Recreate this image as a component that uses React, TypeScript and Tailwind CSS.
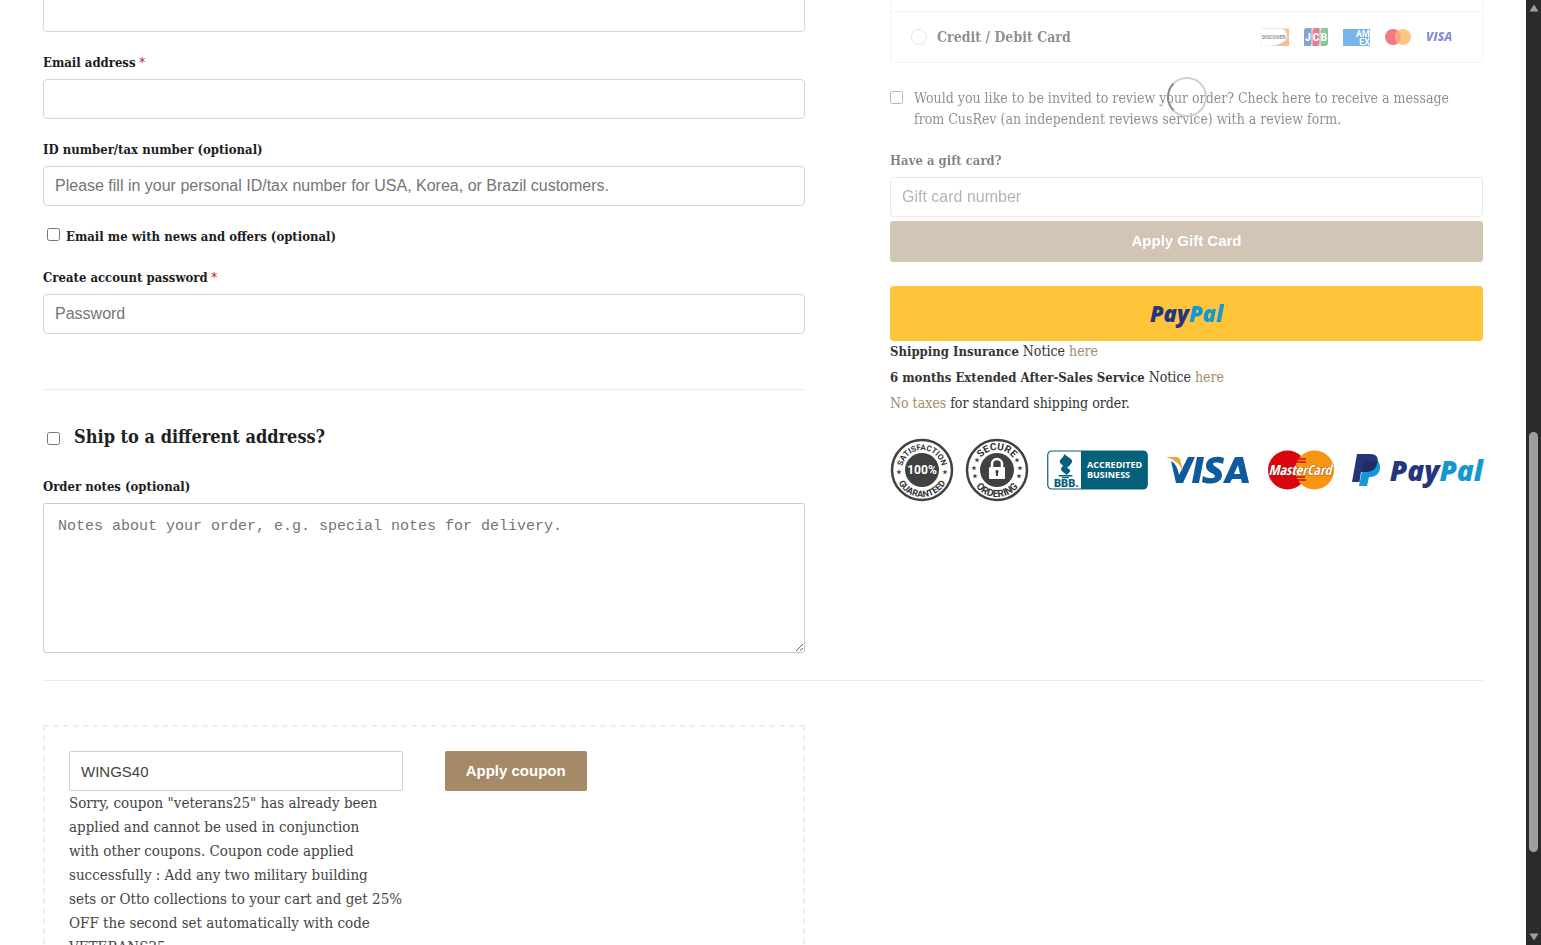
// src/App.tsx
import { ReactNode } from 'react';

const NOTICE_TEXT = 'text-[14px] leading-[21px]';

interface FieldProps {
  id: string;
  label: string;
  type?: string;
  required?: boolean;
  placeholder?: string;
}

const inputClass =
  'block h-10 w-full rounded border border-[#d3d5d6] bg-white px-[11px] font-[Arial,"Liberation_Sans",sans-serif] text-[16px] text-[#444] placeholder:text-[#757575]';

const labelClass = 'block text-[13px] font-semibold leading-[21px] text-[#1c1c1c]';

const Field = ({ id, label, type = 'text', required, placeholder }: FieldProps) => (
  <div className="mt-5">
    <label htmlFor={id} className={`${labelClass} mb-1.5`}>
      {label}
      {required && <span className="font-normal text-[#c01616]"> *</span>}
    </label>
    <input id={id} type={type} placeholder={placeholder} className={inputClass} />
  </div>
);

/* ---------- small card icons ---------- */

const DiscoverIcon = () => (
  <svg viewBox="0 0 28 18" className="h-[18px] w-7" role="img" aria-label="Discover">
    <rect x="0.5" y="0.5" width="27" height="17" fill="#fff" stroke="#ddd" />
    <path d="M21 1h7v17H10c8-1 15-4 16-9 0-4-2-7-5-8z" fill="#f08a3c" />
    <path d="M0.5 1H21c4 1 5 5 4 8-2 5-9 8-16 8.500H0.500z" fill="#fff" />
    <text x="1" y="11" fontSize="5" fontWeight="700" fontFamily="Roboto, sans-serif" fill="#333">
      DISCOVER
    </text>
  </svg>
);

const JcbIcon = () => (
  <svg viewBox="0 0 24 18" className="h-[18px] w-6" role="img" aria-label="JCB">
    <path d="M3 0h5v15a3 3 0 0 1-3 3H0V3a3 3 0 0 1 3-3z" fill="#1c5ba3" />
    <path d="M11 0h5v15a3 3 0 0 1-3 3H8V3a3 3 0 0 1 3-3z" fill="#d2173c" />
    <path d="M19 0h5v15a3 3 0 0 1-3 3h-5V3a3 3 0 0 1 3-3z" fill="#2c9c43" />
    <g fontSize="10" fontWeight="900" fontFamily="Roboto, sans-serif" fill="#fff" textAnchor="middle">
      <text x="4" y="13">J</text>
      <text x="12" y="13">C</text>
      <text x="20" y="13">B</text>
    </g>
    <path d="M8 0v18M16 0v18" stroke="#fff" strokeWidth="0.8" />
  </svg>
);

const AmexIcon = () => (
  <svg viewBox="0 0 27 17" className="h-[17px] w-[27px]" role="img" aria-label="American Express">
    <rect width="27" height="17" fill="#0a79d8" />
    <g fontSize="9" fontWeight="700" fontFamily="Roboto, sans-serif" fill="#fff" textAnchor="end">
      <text x="27" y="8">AM</text>
      <text x="27" y="16">EX</text>
    </g>
  </svg>
);

const MastercardIcon = () => (
  <svg viewBox="0 0 26 16" className="h-4 w-[26px]" role="img" aria-label="Mastercard">
    <circle cx="8" cy="8" r="8" fill="#eb0a25" />
    <circle cx="18" cy="8" r="8" fill="#f79a1a" />
    <path d="M13 1.750a8 8 0 0 1 0 12.500a8 8 0 0 1 0-12.500z" fill="#ff5a10" />
  </svg>
);

const VisaIcon = () => (
  <svg viewBox="0 0 28 16" className="h-4 w-7" role="img" aria-label="Visa">
    <text x="0" y="12" fontSize="12" fontWeight="800" fontStyle="italic" fontFamily='"Open Sans", sans-serif' fill="#1f33b4">
      VISA
    </text>
  </svg>
);

/* ---------- trust badges ---------- */

interface SealProps {
  id: string;
  top: string;
  bottom: string;
  topSize: number;
  bottomSize: number;
  stars: [number, number][];
  children: ReactNode;
}

const Seal = ({ id, top, bottom, topSize, bottomSize, stars, children }: SealProps) => (
  <svg viewBox="0 0 64 64" className="size-16" role="img" aria-label={`${top} ${bottom}`}>
    <defs>
      <path id={`${id}-top`} d="M12 32a20 20 0 0 1 40 0" />
      <path id={`${id}-bottom`} d="M5 32a27 27 0 0 0 54 0" />
    </defs>
    <circle cx="32" cy="32" r="30" fill="#fff" stroke="#414144" strokeWidth="2.500" />
    <circle cx="32" cy="32" r="17" fill="#414144" />
    <g fontFamily="Roboto, sans-serif" fontWeight="700" fill="#333336" textAnchor="middle">
      <text fontSize={topSize}>
        <textPath href={`#${id}-top`} startOffset="50%">
          {top}
        </textPath>
      </text>
      <text fontSize={bottomSize}>
        <textPath href={`#${id}-bottom`} startOffset="50%">
          {bottom}
        </textPath>
      </text>
    </g>
    {stars.map(([x, y]) => (
      <path
        key={`${x}-${y}`}
        transform={`translate(${x} ${y})`}
        d="M0-2.500L0.700-0.800L2.500-0.700L1.100 0.400L1.600 2.200L0 1.200L-1.600 2.200L-1.100 0.400L-2.500-0.700L-0.700-0.800z"
        fill="#414144"
      />
    ))}
    {children}
  </svg>
);

const BbbLogo = () => (
  <svg viewBox="0 0 101 40" className="h-10 w-[101px]" role="img" aria-label="BBB Accredited Business">
    <rect x="0.750" y="1" width="99.500" height="38" rx="4" fill="#fff" stroke="#0b5f74" strokeWidth="1.200" />
    <path d="M34 1h62a4 4 0 0 1 4 4v30a4 4 0 0 1-4 4H34z" fill="#056079" />
    <path d="M17 4l7 5c2 2 1 4-1 6l-3 3-6-4c-2-2-1-4 0-5 2-2 3-3 3-5z" fill="#056079" />
    <path d="M16 15l6 4c2 1 1 3 0 4l-3 2c0-2-5-3-5-6 0-2 2-2 2-4z" fill="#056079" />
    <path d="M11 25h15l-1.500 1.500h-12zM15 27h7v1.200h-7z" fill="#056079" />
    <text x="7" y="37" fontSize="11" fontWeight="900" fontFamily="Roboto, sans-serif" fill="#056079">
      BBB.
    </text>
    <g fontSize="9" fontWeight="700" fontFamily='"Open Sans", sans-serif' fill="#fff">
      <text x="40" y="18">ACCREDITED</text>
      <text x="40" y="28">BUSINESS</text>
    </g>
  </svg>
);

const VisaLogo = () => (
  <svg viewBox="0 0 84 30" className="h-[30px] w-[84px]" role="img" aria-label="Visa">
    <g fill="#0e5a9e">
      <path d="M13 20L22 2h7L17 28H10L5 6c4 2 7 7 8 14z" />
      <path d="M31 2h7l-5 26h-7z" />
      <path d="M58 3l-1 6c-4-2-10-2-10 0 0 3 9 4 9 11 0 9-13 10-20 7l1-6c5 3 12 3 12 0S40 18 40 11c0-9 11-11 18-8z" />
      <path fillRule="evenodd" d="M70 2h7l6 26h-7l-1-4h-9l-2 4h-7L68 4c.5-1 1-2 2-2zm2 8l-4 9h6z" />
    </g>
    <path d="M0 2h10c3 0 4 1 4.500 4L17 16C14 9 8 4 0 2z" fill="#e9a83a" />
  </svg>
);

const MasterCardLogo = () => (
  <svg viewBox="0 0 66 40" className="h-10 w-[66px]" role="img" aria-label="MasterCard">
    <circle cx="19.500" cy="20" r="19.500" fill="#d9060d" />
    <circle cx="46.500" cy="20" r="19.500" fill="#f79410" />
    <path d="M29 9h9M28 12h10M27 27h10M28 30h10" stroke="#d9060d" strokeWidth="1.400" />
    <text
      x="32"
      y="25"
      fontSize="14"
      fontWeight="700"
      fontStyle="italic"
      fontFamily='"Open Sans Condensed", "Liberation Sans Narrow", sans-serif'
      textAnchor="middle"
      fill="#fff"
      stroke="#7d1a12"
      strokeWidth="0.600"
      paintOrder="stroke"
    >
      MasterCard
    </text>
  </svg>
);

const PayPalMark = () => (
  <svg viewBox="0 0 28 34" className="h-[34px] w-7" role="img" aria-label="PayPal mark">
    <path d="M12 7h13c3 3 4 7 2 12-2 4-6 5-10 5l-2 9H7z" fill="#139ad6" />
    <path d="M5 1h13c7 0 9 4 7 10-1 6-6 8-12 8H9L7.500 29H0z" fill="#263577" />
    <path d="M12 8h13c0 7-5 11-12 11H9z" fill="#232c65" />
  </svg>
);

const PayPalWordmark = ({ className }: { className: string }) => (
  <span className={`font-['Open_Sans',sans-serif] font-extrabold italic ${className}`}>
    <span className="text-[#253580]">Pay</span>
    <span className="text-[#1498d4]">Pal</span>
  </span>
);

/* ---------- page sections ---------- */

const BillingForm = () => (
  <section>
    <input aria-label="Phone" type="tel" className={inputClass} />
    <Field id="email" label="Email address" type="email" required />
    <Field
      id="tax"
      label="ID number/tax number (optional)"
      placeholder="Please fill in your personal ID/tax number for USA, Korea, or Brazil customers."
    />
    <label className={`${labelClass} mt-5 flex items-center gap-1.5 pl-1`}>
      <input type="checkbox" className="mb-1 size-[13px]" />
      Email me with news and offers (optional)
    </label>
    <Field id="password" label="Create account password" type="password" required placeholder="Password" />

    <hr className="mt-[55px] border-[#ececec]" />

    <h3 className="mt-8 text-[18px] font-semibold leading-[30px] text-[#1f1f1f]">
      <label className="flex items-center gap-3.5 pl-1">
        <input type="checkbox" className="mt-0.5 size-[13px]" />
        Ship to a different address?
      </label>
    </h3>

    <label htmlFor="notes" className={`${labelClass} mb-1.5 mt-6`}>
      Order notes (optional)
    </label>
    <textarea
      id="notes"
      placeholder="Notes about your order, e.g. special notes for delivery."
      className="block h-[150px] w-full resize rounded-[3px] border border-[#c9cbcc] px-3.5 py-3 font-['Liberation_Mono',monospace] text-[15px] leading-[22px] placeholder:text-[#757575]"
    />
  </section>
);

const PaymentPanel = () => (
  <section>
    <div className="relative">
      <div className="opacity-55">
        <div className="rounded-b border border-t-0 border-[#ececec]">
          <div className="h-[19px]" />
          <label className="flex h-[51px] items-center border-t border-[#ececec] pl-5 pr-7 text-[14px] font-semibold text-[#333]">
            <input
              type="radio"
              name="payment"
              className="mr-2.5 size-4 appearance-none rounded-full border border-[#ccc] bg-white"
            />
            <span className="flex-1">Credit / Debit Card</span>
            <span className="flex items-center gap-[15px]">
              <DiscoverIcon />
              <JcbIcon />
              <AmexIcon />
              <MastercardIcon />
              <VisaIcon />
            </span>
          </label>
        </div>

        <label className={`mt-[25px] flex items-start gap-[11px] ${NOTICE_TEXT} text-[#333]`}>
          <input type="checkbox" className="mt-[3px] size-[13px] shrink-0" />
          <span>
            Would you like to be invited to review your order? Check here to receive a message
            <br />
            from CusRev (an independent reviews service) with a review form.
          </span>
        </label>

        <label htmlFor="gift" className={`${labelClass} mb-1.5 mt-5`}>
          Have a gift card?
        </label>
        <input id="gift" type="text" placeholder="Gift card number" className={inputClass} />
        <button
          type="button"
          className="mt-1 block h-[41px] w-full rounded-[3px] bg-[#ad967a] font-['Liberation_Sans',sans-serif] text-[15px] font-bold text-white"
        >
          Apply Gift Card
        </button>
      </div>

      {/* loading spinner over the blocked panel */}
      <div className="absolute left-1/2 top-[85px] size-10 -translate-x-1/2 rounded-full border-2 border-[#cfcfcf] border-l-[#888]" />
    </div>

    <button type="button" className="mt-6 flex h-[55px] w-full items-center justify-center rounded bg-[#ffc439]">
      <PayPalWordmark className="text-[22px]" />
    </button>

    <div className={`flex flex-col gap-[5px] ${NOTICE_TEXT} text-[#333]`}>
      <p>
        <strong className="text-[13px] font-semibold">Shipping Insurance</strong> Notice{' '}
        <a href="#insurance" className="text-[#a38c6c]">here</a>
      </p>
      <p>
        <strong className="text-[13px] font-semibold">6 months Extended After-Sales Service</strong> Notice{' '}
        <a href="#service" className="text-[#a38c6c]">here</a>
      </p>
      <p>
        <a href="#taxes" className="text-[#a38c6c]">No taxes</a> for standard shipping order.
      </p>
    </div>

    <div className="mt-6 flex items-center justify-between">
      <div className="flex gap-[11px]">
        <Seal
          id="satisfaction"
          top="SATISFACTION"
          bottom="GUARANTEED"
          topSize={8}
          bottomSize={9}
          stars={[[9, 34], [55, 34]]}
        >
          <text x="32" y="36" fontSize="12" fontWeight="700" fontFamily="Roboto, sans-serif" textAnchor="middle" fill="#fff">
            100%
          </text>
        </Seal>
        <Seal
          id="secure"
          top="SECURE"
          bottom="ORDERING"
          topSize={10}
          bottomSize={10}
          stars={[[12, 22], [9, 30], [10, 38], [52, 22], [55, 30], [54, 38]]}
        >
          <path d="M27 30v-4a5 5 0 0 1 10 0v4" fill="none" stroke="#fff" strokeWidth="2.500" />
          <rect x="24" y="29" width="16" height="12" rx="1" fill="#fff" />
          <path d="M32 32a1.700 1.700 0 0 1 1 3v3h-2v-3a1.700 1.700 0 0 1 1-3z" fill="#414144" />
        </Seal>
      </div>
      <BbbLogo />
      <VisaLogo />
      <MasterCardLogo />
      <div className="flex items-center gap-2.5">
        <PayPalMark />
        <PayPalWordmark className="text-[28px] leading-10" />
      </div>
    </div>
  </section>
);

const CouponBox = () => (
  <form className="flex items-start gap-[42px] border-2 border-dashed border-[#efefef] p-6">
    <div className="w-[47%]">
      <input
        aria-label="Coupon code"
        type="text"
        defaultValue="WINGS40"
        className="block h-10 w-full rounded-[2px] border border-[#cfcfcf] px-[11px] font-['Liberation_Sans',sans-serif] text-[15px] text-[#444]"
      />
      <p className="whitespace-nowrap text-[15px] leading-6 text-[#444]">
        Sorry, coupon "veterans25" has already been
        <br />
        applied and cannot be used in conjunction
        <br />
        with other coupons. Coupon code applied
        <br />
        successfully : Add any two military building
        <br />
        sets or Otto collections to your cart and get 25%
        <br />
        OFF the second set automatically with code
        <br />
        VETERANS25.
      </p>
    </div>
    <button
      type="button"
      className="h-10 rounded-[2px] bg-[#a58a67] px-[21px] font-['Liberation_Sans',sans-serif] text-[15px] font-bold text-white"
    >
      Apply coupon
    </button>
  </form>
);

const ScrollRail = () => (
  <div aria-hidden="true" className="flex w-[15px] shrink-0 flex-col items-center bg-[#2b2b2b] py-1">
    <svg viewBox="0 0 10 8" className="h-2 w-2.5">
      <path d="M5 0.500L9.500 7.500h-9z" fill="#9f9f9f" />
    </svg>
    <div className="flex-[420]" />
    <div className="w-[9px] flex-[420] rounded-full bg-[#9f9f9f]" />
    <div className="flex-[81]" />
    <svg viewBox="0 0 10 8" className="h-2 w-2.5">
      <path d="M5 7.500L0.500 0.500h9z" fill="#9f9f9f" />
    </svg>
  </div>
);

export default function App() {
  return (
    <div className="flex h-screen overflow-hidden bg-white font-['Roboto_Slab','DejaVu_Serif_Condensed','DejaVu_Serif',serif]">
      <main className="min-w-0 flex-1 overflow-hidden px-[43px]">
        <div className="-mt-2 grid grid-cols-[762fr_593fr] gap-x-[85px] border-b border-[#ececec] pb-[27px]">
          <BillingForm />
          <PaymentPanel />
        </div>
        <div className="mt-11 grid grid-cols-[762fr_593fr] gap-x-[85px]">
          <CouponBox />
        </div>
      </main>
      <ScrollRail />
    </div>
  );
}
